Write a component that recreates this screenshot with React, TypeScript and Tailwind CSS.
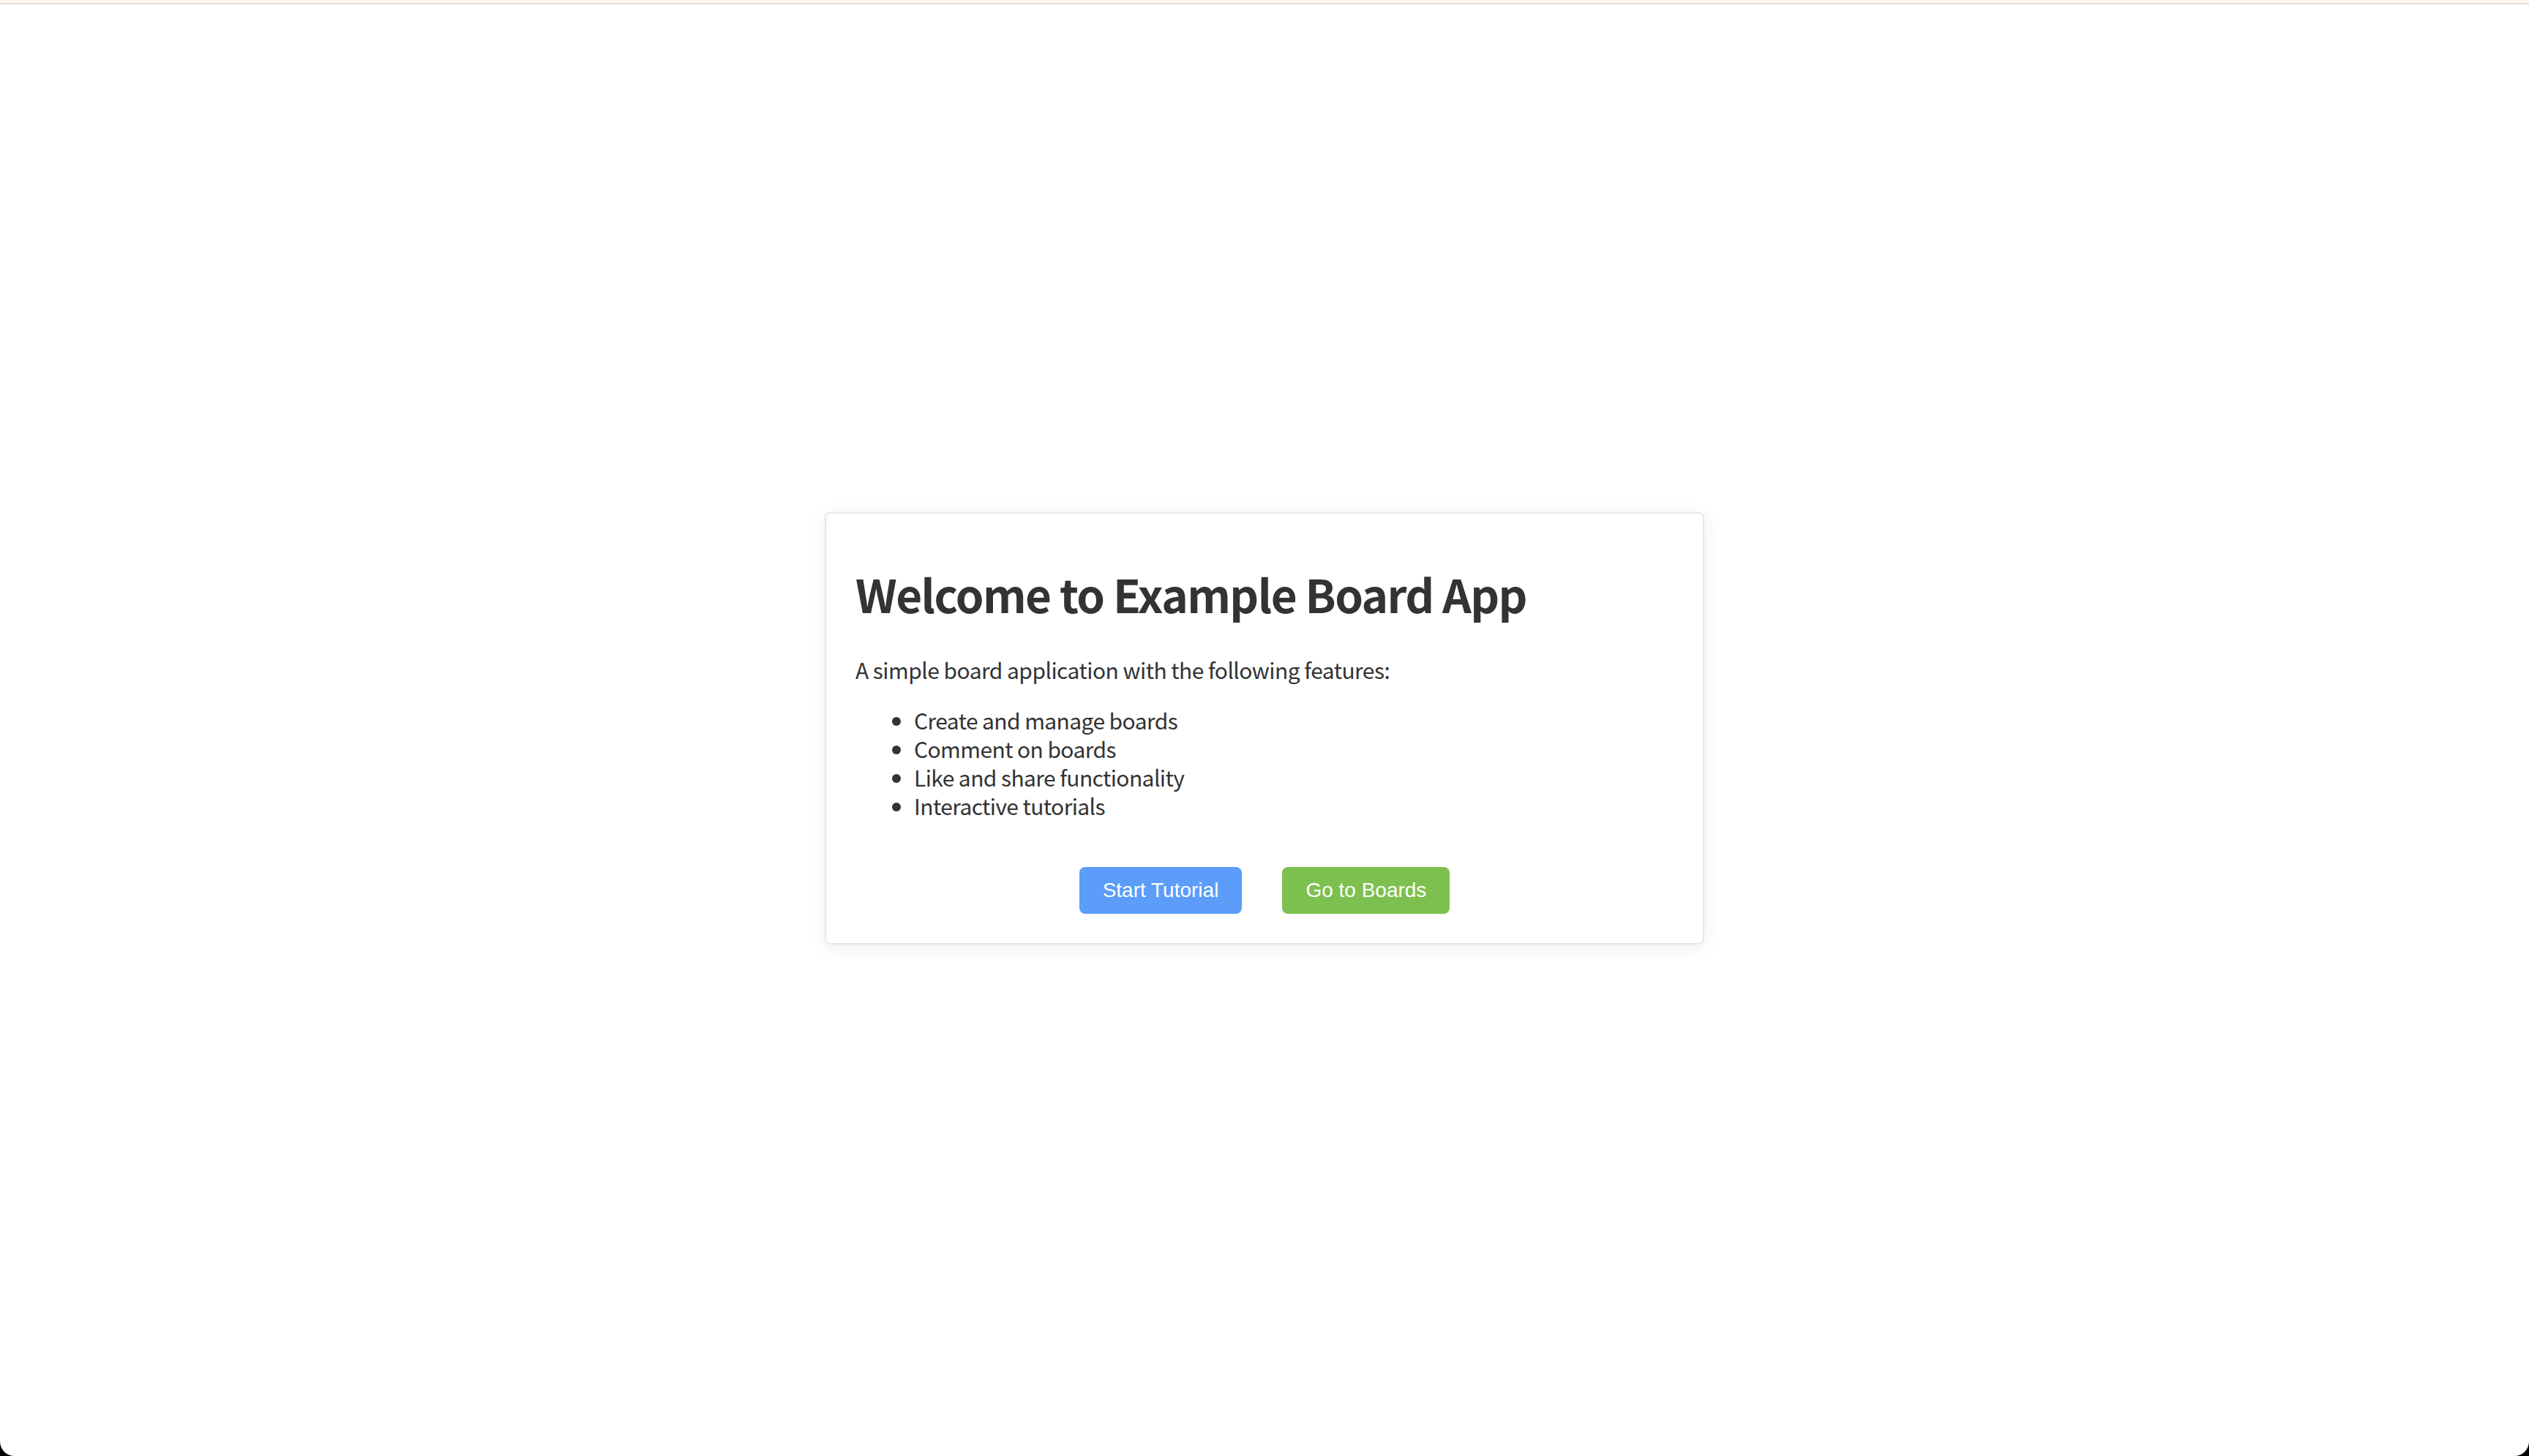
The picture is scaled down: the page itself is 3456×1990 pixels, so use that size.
import * as React from "react";

const FEATURES = [
    "Create and manage boards",
    "Comment on boards",
    "Like and share functionality",
    "Interactive tutorials",
];

export default function App() {
    return (
        <div className="min-h-screen bg-black">
            <div className="relative flex min-h-screen flex-col rounded-b-[20px] bg-white">
                {/* thin top strip from the browser chrome */}
                <div className="h-[4px] w-full bg-[#fff6f0]" />
                <div className="h-[2px] w-full bg-[#ecdccd]" />

                <main className="flex flex-1 items-center justify-center pb-[6px]">
                    <section
                        className="w-[1202px] rounded-[8px] border-2 border-[#e6e6ec] bg-white p-[40px] text-[#333333] shadow-[0_4px_24px_rgba(0,0,0,0.07)]"
                        style={{ fontFamily: '"Noto Sans CJK KR", "Noto Sans", sans-serif' }}
                    >
                        <h1 className="mt-[31px] text-[62px] font-bold leading-[77px] tracking-[-1.6px]">
                            Welcome to Example Board App
                        </h1>
                        <p className="mt-[46px] text-[30px] leading-[39px] tracking-[-0.55px]">
                            A simple board application with the following features:
                        </p>
                        <ul className="mt-[30px] list-disc pl-[80px] text-[30px] leading-[39px] tracking-[-0.6px]">
                            {FEATURES.map((f) => (
                                <li key={f}>{f}</li>
                            ))}
                        </ul>
                        <div
                            className="mt-[64px] flex justify-center gap-[55px]"
                            style={{ fontFamily: '"Liberation Sans", Arial, sans-serif' }}
                        >
                            <button className="h-[64px] rounded-[8px] bg-[#5b9df8] px-[32px] text-[28px] text-white">
                                Start Tutorial
                            </button>
                            <button className="h-[64px] rounded-[8px] bg-[#7ec050] px-[32px] text-[28px] text-white">
                                Go to Boards
                            </button>
                        </div>
                    </section>
                </main>
            </div>
        </div>
    );
}
